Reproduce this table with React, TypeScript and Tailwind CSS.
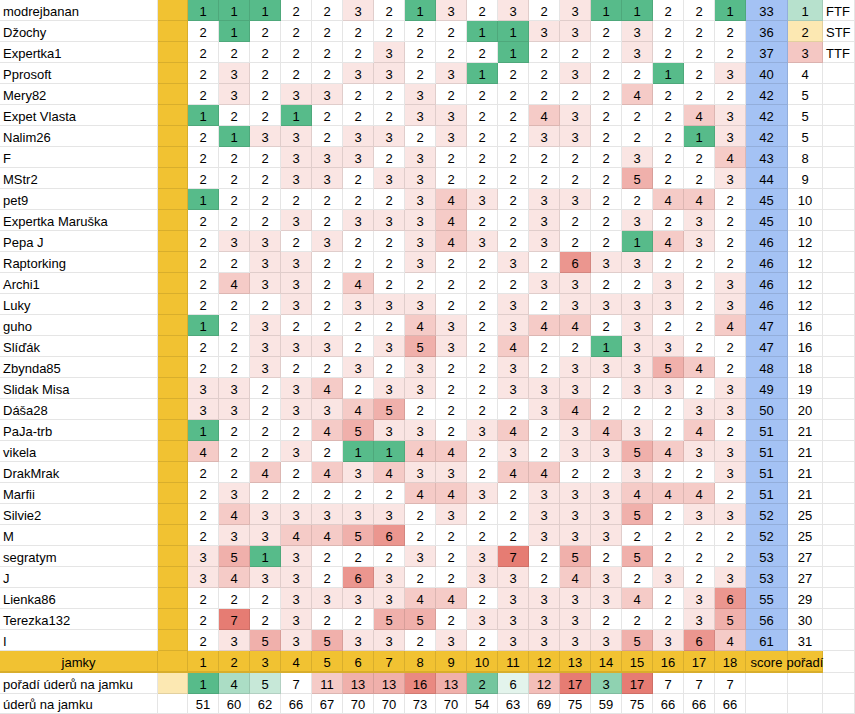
import React from "react";

type Player = [string, number[], number, number];

const players: Player[] = [
  ["modrejbanan", [1, 1, 1, 2, 2, 3, 2, 1, 3, 2, 3, 2, 3, 1, 1, 2, 2, 1], 33, 1],
  ["Džochy", [2, 1, 2, 2, 2, 2, 2, 2, 2, 1, 1, 3, 3, 2, 3, 2, 2, 2], 36, 2],
  ["Expertka1", [2, 2, 2, 2, 2, 2, 3, 2, 2, 2, 1, 2, 2, 2, 3, 2, 2, 2], 37, 3],
  ["Pprosoft", [2, 3, 2, 2, 2, 3, 3, 2, 3, 1, 2, 2, 3, 2, 2, 1, 2, 3], 40, 4],
  ["Mery82", [2, 3, 2, 3, 3, 2, 2, 3, 2, 2, 2, 2, 2, 2, 4, 2, 2, 2], 42, 5],
  ["Expet Vlasta", [1, 2, 2, 1, 2, 2, 2, 3, 3, 2, 2, 4, 3, 2, 2, 2, 4, 3], 42, 5],
  ["Nalim26", [2, 1, 3, 3, 2, 3, 3, 2, 3, 2, 2, 3, 3, 2, 2, 2, 1, 3], 42, 5],
  ["F", [2, 2, 2, 3, 3, 3, 2, 3, 2, 2, 2, 2, 2, 2, 3, 2, 2, 4], 43, 8],
  ["MStr2", [2, 2, 2, 3, 3, 2, 3, 3, 2, 2, 2, 2, 2, 2, 5, 2, 2, 3], 44, 9],
  ["pet9", [1, 2, 2, 2, 2, 2, 2, 3, 4, 3, 2, 3, 3, 2, 2, 4, 4, 2], 45, 10],
  ["Expertka Maruška", [2, 2, 2, 3, 2, 3, 3, 3, 4, 2, 2, 3, 2, 2, 3, 2, 3, 2], 45, 10],
  ["Pepa J", [2, 3, 3, 2, 3, 2, 2, 3, 4, 3, 2, 3, 2, 2, 1, 4, 3, 2], 46, 12],
  ["Raptorking", [2, 2, 3, 3, 2, 2, 2, 3, 2, 2, 3, 2, 6, 3, 3, 2, 2, 2], 46, 12],
  ["Archi1", [2, 4, 3, 3, 2, 4, 2, 2, 2, 2, 2, 3, 3, 2, 2, 3, 2, 3], 46, 12],
  ["Luky", [2, 2, 2, 3, 2, 3, 3, 3, 2, 2, 3, 2, 3, 3, 3, 3, 2, 3], 46, 12],
  ["guho", [1, 2, 3, 2, 2, 2, 2, 4, 3, 2, 3, 4, 4, 2, 3, 2, 2, 4], 47, 16],
  ["Slíďák", [2, 2, 3, 3, 3, 2, 3, 5, 3, 2, 4, 2, 2, 1, 3, 3, 2, 2], 47, 16],
  ["Zbynda85", [2, 2, 3, 2, 2, 3, 2, 3, 2, 2, 3, 2, 3, 3, 3, 5, 4, 2], 48, 18],
  ["Slidak Misa", [3, 3, 2, 3, 4, 2, 3, 3, 2, 2, 3, 3, 3, 2, 3, 3, 2, 3], 49, 19],
  ["Dáša28", [3, 3, 2, 3, 3, 4, 5, 2, 2, 2, 2, 3, 4, 2, 2, 2, 3, 3], 50, 20],
  ["PaJa-trb", [1, 2, 2, 2, 4, 5, 3, 3, 2, 3, 4, 2, 3, 4, 3, 2, 4, 2], 51, 21],
  ["vikela", [4, 2, 2, 3, 2, 1, 1, 4, 4, 2, 3, 2, 3, 3, 5, 4, 3, 3], 51, 21],
  ["DrakMrak", [2, 2, 4, 2, 4, 3, 4, 3, 3, 2, 4, 4, 2, 2, 3, 2, 2, 3], 51, 21],
  ["Marfii", [2, 3, 2, 2, 2, 2, 2, 4, 4, 3, 2, 3, 3, 3, 4, 4, 4, 2], 51, 21],
  ["Silvie2", [2, 4, 3, 3, 3, 3, 3, 2, 3, 2, 2, 3, 3, 3, 5, 2, 3, 3], 52, 25],
  ["M", [2, 3, 3, 4, 4, 5, 6, 2, 2, 2, 2, 3, 3, 3, 2, 2, 2, 2], 52, 25],
  ["segratym", [3, 5, 1, 3, 2, 2, 2, 3, 2, 3, 7, 2, 5, 2, 5, 2, 2, 2], 53, 27],
  ["J", [3, 4, 3, 3, 2, 6, 3, 2, 2, 3, 3, 2, 4, 3, 2, 3, 2, 3], 53, 27],
  ["Lienka86", [2, 2, 2, 3, 3, 3, 3, 4, 4, 2, 3, 3, 3, 3, 4, 2, 3, 6], 55, 29],
  ["Terezka132", [2, 7, 2, 3, 2, 2, 5, 5, 2, 3, 3, 3, 3, 2, 2, 2, 3, 5], 56, 30],
  ["I", [2, 3, 5, 3, 5, 3, 3, 2, 3, 2, 3, 3, 3, 3, 5, 3, 6, 4], 61, 31],
];

const holeRank = [1, 4, 5, 7, 11, 13, 13, 16, 13, 2, 6, 12, 17, 3, 17, 7, 7, 7];
const holeTotal = [51, 60, 62, 66, 67, 70, 70, 73, 70, 54, 63, 69, 75, 59, 75, 66, 66, 66];

const strokeBg: Record<number, string> = {
  1: "bg-[#57bb8a]",
  2: "bg-white",
  3: "bg-[#fae5e3]",
  4: "bg-[#f5cbc7]",
  5: "bg-[#f0b0ab]",
  6: "bg-[#eb968f]",
  7: "bg-[#e67c73]",
};

const placeBg: Record<number, string> = {
  1: "bg-[#b7e1cd]",
  2: "bg-[#fce8b2]",
  3: "bg-[#f4c7c3]",
};

const medal: Record<number, string> = { 1: "FTF", 2: "STF", 3: "TTF" };

// color scale green (1) -> white (7) -> red (17)
function rankColor(v: number) {
  const mix = (a: number[], t: number) =>
    `rgb(${a.map((c) => Math.round(255 + (c - 255) * t)).join(",")})`;
  if (v < 7) return mix([87, 187, 138], (7 - v) / 6);
  return mix([230, 124, 115], (v - 7) / 10);
}

const cell = "flex items-end justify-center pb-[1px] leading-[15px] border-b border-r border-b-black/10 border-r-black/10";

const App: React.FC = () => {
  return (
    <div className="w-[855px] h-[714px] overflow-hidden bg-white text-[13px] text-black font-['Liberation_Sans',Arial,sans-serif]">
      <div className="grid grid-cols-[158px_30px_repeat(18,31px)_42px_35px_32px]">
        {players.map(([name, holes, score, place]) => (
          <React.Fragment key={name}>
            <div className={`${cell} h-[21px] justify-start pl-[3px] border-r-black whitespace-nowrap`}>{name}</div>
            <div className={`${cell} h-[21px] bg-[#f1c232] border-r-black`}></div>
            {holes.map((v, i) => (
              <div key={i} className={`${cell} h-[21px] ${strokeBg[v]} ${i === 17 ? "border-r-black" : ""}`}>
                {v}
              </div>
            ))}
            <div className={`${cell} h-[21px] bg-[#a4c2f4]`}>{score}</div>
            <div className={`${cell} h-[21px] ${placeBg[place] ?? "bg-white"}`}>{place}</div>
            <div className={`${cell} h-[21px] justify-start pl-[3px]`}>{medal[place] ?? ""}</div>
          </React.Fragment>
        ))}

        {/* jamky header */}
        <div className={`${cell} h-[22px] bg-[#f1c232] border-b-2 border-b-black border-r-black`}>jamky</div>
        <div className={`${cell} h-[22px] bg-[#f1c232] border-b-2 border-b-black border-r-black`}></div>
        {holes18().map((n) => (
          <div key={n} className={`${cell} h-[22px] bg-[#f1c232] border-b-2 border-b-black`}>
            {n}
          </div>
        ))}
        <div className={`${cell} h-[22px] bg-[#f1c232] border-b-2 border-b-black`}>score</div>
        <div className={`${cell} h-[22px] bg-[#f1c232] border-b-2 border-b-black whitespace-nowrap`}>pořadí</div>
        <div className={`${cell} h-[22px]`}></div>

        {/* pořadí úderů */}
        <div className={`${cell} h-[21px] justify-start pl-[3px] border-r-black whitespace-nowrap`}>pořadí úderů na jamku</div>
        <div className={`${cell} h-[21px] bg-[#fce8b2] border-r-black`}></div>
        {holeRank.map((v, i) => (
          <div key={i} className={`${cell} h-[21px]`} style={{ backgroundColor: rankColor(v) }}>
            {v}
          </div>
        ))}
        <div className={`${cell} h-[21px]`}></div>
        <div className={`${cell} h-[21px]`}></div>
        <div className={`${cell} h-[21px]`}></div>

        {/* úderů */}
        <div className={`${cell} h-[20px] justify-start pl-[3px] border-r-black whitespace-nowrap`}>úderů na jamku</div>
        <div className={`${cell} h-[20px] border-r-black`}></div>
        {holeTotal.map((v, i) => (
          <div key={i} className={`${cell} h-[20px]`}>
            {v}
          </div>
        ))}
        <div className={`${cell} h-[20px]`}></div>
        <div className={`${cell} h-[20px]`}></div>
        <div className={`${cell} h-[20px]`}></div>
      </div>
    </div>
  );
};

function holes18() {
  return Array.from({ length: 18 }, (_, i) => i + 1);
}

export default App;
